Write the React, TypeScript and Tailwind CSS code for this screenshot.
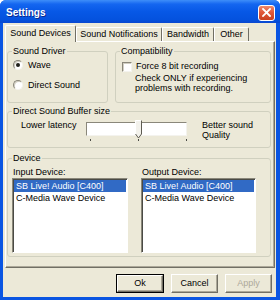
import type { ReactNode } from "react";

const TABS = [
  { label: "Sound Devices", width: "w-[71px]", active: true },
  { label: "Sound Notifications", width: "w-[86px]", active: false },
  { label: "Bandwidth", width: "w-[52px]", active: false },
  { label: "Other", width: "w-[35px]", active: false },
];

const DEVICES = ["SB Live! Audio [C400]", "C-Media Wave Device"];

function Group({ title, className, children }: { title: string; className: string; children: ReactNode }) {
  return (
    <fieldset className={`rounded-[3px] border border-[#D0D0BF] ${className}`}>
      <legend className="ml-[4px] px-[1px] leading-[11px]">{title}</legend>
      {children}
    </fieldset>
  );
}

function Radio({ label, checked }: { label: string; checked?: boolean }) {
  return (
    <div className="flex h-[10px] items-center gap-[5px]">
      <span className="flex h-[10px] w-[10px] items-center justify-center rounded-full border border-t-[#8A877A] border-l-[#8A877A] border-r-[#F4F3EE] border-b-[#F4F3EE] bg-white shadow-[inset_1px_1px_0_#D2CFC2]">
        {checked ? <span className="h-[4px] w-[4px] rounded-full bg-[#21211B]" /> : null}
      </span>
      <span className="leading-[10px]">{label}</span>
    </div>
  );
}

function DeviceList({ label, className }: { label: string; className: string }) {
  return (
    <div className={`flex flex-col ${className}`}>
      <span className="ml-[1px] leading-[10px]">{label}</span>
      <div className="mt-[1px] h-[75px] border border-t-[#8A877A] border-l-[#8A877A] border-r-white border-b-white bg-white px-[1px] shadow-[inset_1px_1px_0_#4A4A45]">
        <div className="pt-[1px]">
          {DEVICES.map((device, index) => (
            <div
              key={device}
              className={`pl-[2px] leading-[12px] whitespace-nowrap ${index === 0 ? "bg-[#316AC5] text-white" : ""}`}
            >
              {device}
            </div>
          ))}
        </div>
      </div>
    </div>
  );
}

function Button({ label, isDefault, disabled }: { label: string; isDefault?: boolean; disabled?: boolean }) {
  return (
    <div className={`h-[19px] ${isDefault ? "w-[48px] border border-black" : "w-[47px]"}`}>
      <div
        className={`flex h-full w-full items-center justify-center border border-t-white border-l-white border-r-[#716F64] border-b-[#716F64] bg-[#ECE9D8] shadow-[inset_-1px_-1px_0_#ACA899] ${
          disabled ? "text-[#ACA899]" : "text-black"
        }`}
      >
        {label}
      </div>
    </div>
  );
}

export default function App() {
  return (
    <div className="flex h-[300px] w-[280px] flex-col overflow-hidden rounded-t-[6px] bg-[#0A55E2] font-['Liberation_Sans',Arial,sans-serif] text-[9px] leading-[11px] text-black">
      <div className="flex h-[23px] shrink-0 items-center justify-between bg-[linear-gradient(to_bottom,#3E8EF9_0%,#1466F0_18%,#0758E6_50%,#0452DE_85%,#0A48CF_100%)] pl-[6px] pr-[5px] pt-[2px]">
        <span className="text-[10px] font-bold text-white [text-shadow:1px_1px_0_#0B2A8F]">Settings</span>
        <div className="flex h-[16px] w-[17px] items-center justify-center rounded-[3px] border border-white bg-[linear-gradient(to_bottom,#EE8A6C_0%,#E0583A_45%,#C9401F_100%)]">
          <svg width="9" height="9" viewBox="0 0 9 9">
            <path d="M1 1 L8 8 M8 1 L1 8" stroke="white" strokeWidth="1.8" strokeLinecap="square" />
          </svg>
        </div>
      </div>

      <div className="mb-[3px] ml-[3px] mr-[4px] flex flex-1 flex-col bg-[#ECE9D8]">
        <div className="relative z-10 mt-[2px] -mb-[1px] ml-[2px] flex h-[17px] items-end">
          {TABS.map((tab) =>
            tab.active ? (
              <div
                key={tab.label}
                className={`${tab.width} flex h-[17px] items-center justify-center rounded-t-[2px] border-t border-l border-r border-t-white border-l-white border-r-[#716F64] bg-[#ECE9D8] pb-[1px]`}
              >
                {tab.label}
              </div>
            ) : (
              <div
                key={tab.label}
                className={`${tab.width} mb-[1px] flex h-[14px] items-center justify-center rounded-tr-[2px] border-t border-l border-r border-t-white border-l-white border-r-[#716F64]`}
              >
                {tab.label}
              </div>
            ),
          )}
        </div>

        <div className="ml-[2px] flex h-[227px] w-[270px] flex-col border border-t-white border-l-white border-r-[#716F64] border-b-[#716F64] pl-[1px] pt-[4px] shadow-[inset_-1px_-1px_0_#ACA899]">
          <div className="flex gap-[7px]">
            <Group title="Sound Driver" className="h-[57px] w-[101px]">
              <div className="mt-[3px] flex flex-col gap-[10px] pl-[5px]">
                <Radio label="Wave" checked />
                <Radio label="Direct Sound" />
              </div>
            </Group>
            <Group title="Compatibility" className="h-[57px] w-[156px]">
              <div className="mt-[5px] flex items-center gap-[4px] pl-[6px]">
                <span className="h-[10px] w-[10px] border border-t-[#8A877A] border-l-[#8A877A] border-r-[#F4F3EE] border-b-[#F4F3EE] bg-white shadow-[inset_1px_1px_0_#D2CFC2]" />
                <span className="-mt-[3px] leading-[10px]">Force 8 bit recording</span>
              </div>
              <div className="mt-[1px] pl-[19px] leading-[10px]">
                Check ONLY if experiencing
                <br />
                problems with recording.
              </div>
            </Group>
          </div>

          <Group title="Direct Sound Buffer size" className="mt-[3px] h-[42px] w-[264px]">
            <div className="flex pl-[13px] pt-[3px]">
              <span className="w-[65px] leading-[10px]">Lower latency</span>
              <div className="relative mt-[2px] w-[101px]">
                <div className="h-[14px] border border-t-[#8A877A] border-l-[#8A877A] border-r-[#F4F3EE] border-b-[#F4F3EE] bg-white" />
                <div className="mt-[3px] flex h-[2px] justify-between pl-[4px]">
                  <span className="w-[1px] bg-[#4A4A45]" />
                  <span className="w-[1px] bg-[#4A4A45]" />
                  <span className="w-[1px] bg-[#4A4A45]" />
                </div>
                <svg className="absolute left-[49px] top-[-2px]" width="7" height="19" viewBox="0 0 7 19">
                  <polygon points="0.5,0.5 6.5,0.5 6.5,14 3.5,18 0.5,14" fill="#F3F2EC" />
                  <path d="M0.5 14 L0.5 0.5 L6.5 0.5" fill="none" stroke="#FFFFFF" />
                  <path d="M6.5 0.5 L6.5 14 L3.5 18 L0.5 14" fill="none" stroke="#5E5C52" />
                </svg>
              </div>
              <span className="ml-[15px] leading-[10px]">
                Better sound
                <br />
                Quality
              </span>
            </div>
          </Group>

          <Group title="Device" className="mt-[5px] h-[104px] w-[264px]">
            <div className="mt-[3px] flex gap-[13px] pl-[4px]">
              <DeviceList label="Input Device:" className="w-[116px]" />
              <DeviceList label="Output Device:" className="w-[115px]" />
            </div>
          </Group>
        </div>

        <div className="mt-[6px] flex justify-end gap-[7px] pr-[4px]">
          <Button label="Ok" isDefault />
          <Button label="Cancel" />
          <Button label="Apply" disabled />
        </div>
      </div>
    </div>
  );
}
